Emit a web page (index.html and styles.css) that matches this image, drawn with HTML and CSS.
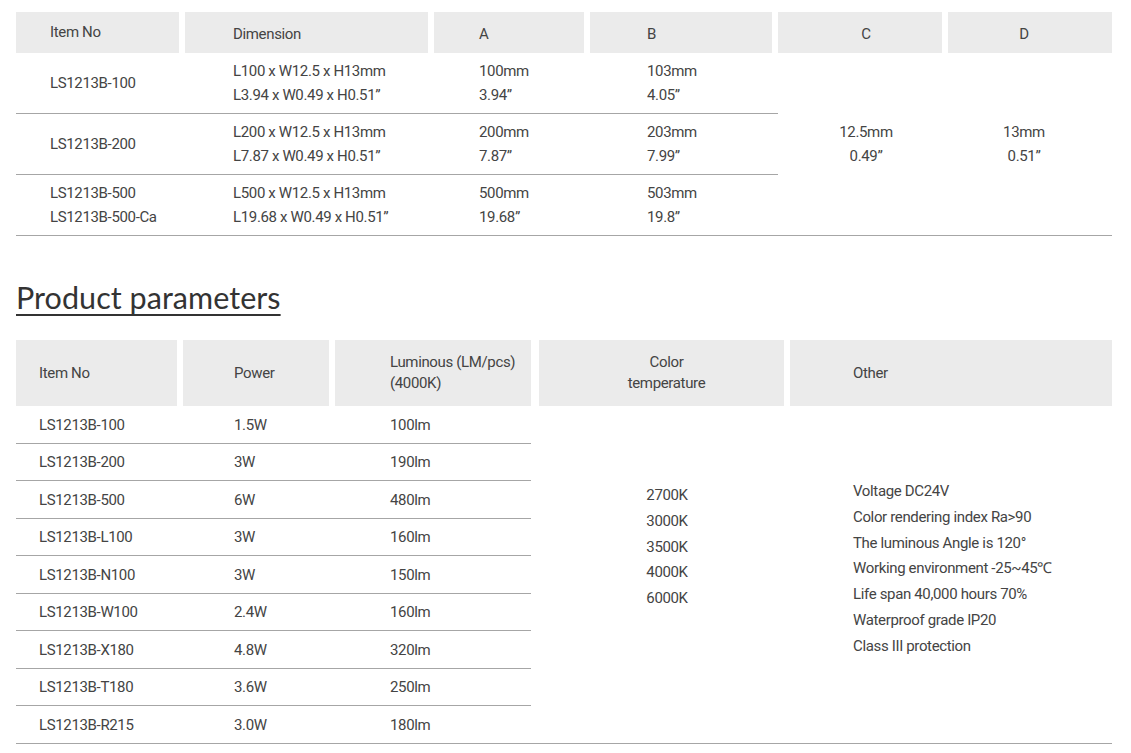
FILE: index.html
```html
<!DOCTYPE html>
<html>
<head>
<meta charset="utf-8">
<link rel="stylesheet" href="styles.css">
</head>
<body>
<div class="page">
  <table class="spec dims">
    <colgroup>
      <col class="d1"><col class="d2"><col class="d3"><col class="d4"><col class="d5"><col class="d6">
    </colgroup>
    <thead>
      <tr>
        <th class="pl-item up">Item No</th>
        <th class="pl-dim">Dimension</th>
        <th class="pl-a">A</th>
        <th class="pl-b">B</th>
        <th class="center col-c">C</th>
        <th class="center col-d last">D</th>
      </tr>
    </thead>
    <tbody>
      <tr>
        <td class="pl-item">LS1213B-100</td>
        <td class="pl-dim">L100 x W12.5 x H13mm<br>L3.94 x W0.49 x H0.51”</td>
        <td class="pl-a">100mm<br>3.94”</td>
        <td class="pl-b">103mm<br>4.05”</td>
        <td class="center span col-c" rowspan="3">12.5mm<br>0.49”</td>
        <td class="center span col-d" rowspan="3">13mm<br>0.51”</td>
      </tr>
      <tr>
        <td class="pl-item">LS1213B-200</td>
        <td class="pl-dim">L200 x W12.5 x H13mm<br>L7.87 x W0.49 x H0.51”</td>
        <td class="pl-a">200mm<br>7.87”</td>
        <td class="pl-b">203mm<br>7.99”</td>
      </tr>
      <tr>
        <td class="pl-item">LS1213B-500<br>LS1213B-500-Ca</td>
        <td class="pl-dim">L500 x W12.5 x H13mm<br>L19.68 x W0.49 x H0.51”</td>
        <td class="pl-a">500mm<br>19.68”</td>
        <td class="pl-b">503mm<br>19.8”</td>
      </tr>
    </tbody>
  </table>

  <h2 class="section-title">Product parameters</h2>

  <table class="spec params">
    <colgroup>
      <col class="p1"><col class="p2"><col class="p3"><col class="p4"><col class="p5">
    </colgroup>
    <thead>
      <tr>
        <th class="ppl-item">Item No</th>
        <th class="ppl-power">Power</th>
        <th class="ppl-lum nogap">Luminous (LM/pcs)<br>(4000K)</th>
        <th class="center wide-left temp-head">Color<br>temperature</th>
        <th class="ppl-other last">Other</th>
      </tr>
    </thead>
    <tbody>
      <tr>
        <td class="ppl-item">LS1213B-100</td>
        <td class="ppl-power">1.5W</td>
        <td class="ppl-lum">100lm</td>
        <td class="center temps" rowspan="9">2700K<br>3000K<br>3500K<br>4000K<br>6000K</td>
        <td class="others" rowspan="9">
          <ul class="other-list">
            <li>Voltage DC24V</li>
            <li>Color rendering index Ra&gt;90</li>
            <li>The luminous Angle is 120°</li>
            <li>Working environment -25~45℃</li>
            <li>Life span 40,000 hours 70%</li>
            <li>Waterproof grade IP20</li>
            <li>Class III protection</li>
          </ul>
        </td>
      </tr>
      <tr><td class="ppl-item">LS1213B-200</td><td class="ppl-power">3W</td><td class="ppl-lum">190lm</td></tr>
      <tr><td class="ppl-item">LS1213B-500</td><td class="ppl-power">6W</td><td class="ppl-lum">480lm</td></tr>
      <tr><td class="ppl-item">LS1213B-L100</td><td class="ppl-power">3W</td><td class="ppl-lum">160lm</td></tr>
      <tr><td class="ppl-item">LS1213B-N100</td><td class="ppl-power">3W</td><td class="ppl-lum">150lm</td></tr>
      <tr><td class="ppl-item">LS1213B-W100</td><td class="ppl-power">2.4W</td><td class="ppl-lum">160lm</td></tr>
      <tr><td class="ppl-item">LS1213B-X180</td><td class="ppl-power">4.8W</td><td class="ppl-lum">320lm</td></tr>
      <tr><td class="ppl-item">LS1213B-T180</td><td class="ppl-power">3.6W</td><td class="ppl-lum">250lm</td></tr>
      <tr><td class="ppl-item">LS1213B-R215</td><td class="ppl-power">3.0W</td><td class="ppl-lum">180lm</td></tr>
    </tbody>
  </table>
</div>
</body>
</html>
```

FILE: styles.css
```css
* { box-sizing: border-box; }

html, body {
  margin: 0;
  padding: 0;
  background: #fff;
}

body {
  font-family: Roboto, "Liberation Sans", sans-serif;
  font-size: 15px;
  color: #444;
  letter-spacing: -0.35px;
}

.page {
  padding: 12px 19px 0 16px;
  width: 1131px;
}

.spec {
  width: 1096px;
  border-collapse: separate;
  border-spacing: 0;
  table-layout: fixed;
}

.spec th {
  background: #ebebeb;
  background-clip: padding-box;
  border-right: 6px solid #fff;
  font-weight: 400;
  text-align: left;
  padding: 0;
}

.spec th.last { border-right: 0; }

.spec td {
  padding: 0;
  text-align: left;
  border-bottom: 1px solid #a6a6a6;
}

.spec .center { text-align: center; }

/* ---------- Dimensions table ---------- */
.dims .d1 { width: 169px; }
.dims .d2 { width: 249px; }
.dims .d3 { width: 156px; }
.dims .d4 { width: 188px; }
.dims .d5 { width: 170px; }
.dims .d6 { width: 164px; }

.dims th {
  height: 41px;
  vertical-align: middle;
  padding-top: 2px;
}

.dims th.up { padding-top: 0; padding-bottom: 2px; }

.dims td {
  height: 61px;
  line-height: 24px;
  vertical-align: middle;
}

.dims .pl-item { padding-left: 34px; }
.dims .pl-dim { padding-left: 48px; }
.dims .pl-a { padding-left: 45px; }
.dims .pl-b { padding-left: 57px; }

.dims th.col-c { padding-left: 12px; }
.dims th.col-d { padding-right: 12px; }
.dims td.col-c { padding-left: 6px; }
.dims td.col-d { padding-right: 12px; }

/* ---------- Section title ---------- */
.section-title {
  margin: 43px 0 25px 0;
  font-family: Lato, "Open Sans", sans-serif;
  font-weight: 400;
  font-size: 30.5px;
  line-height: 36px;
  color: #333;
  letter-spacing: 0.05px;
  text-decoration: underline;
  text-decoration-thickness: 2px;
  text-underline-offset: 5px;
}

/* ---------- Parameters table ---------- */
.params .p1 { width: 167px; }
.params .p2 { width: 152px; }
.params .p3 { width: 196px; }
.params .p4 { width: 259px; }
.params .p5 { width: 322px; }

.params th {
  height: 66px;
  line-height: 21px;
  vertical-align: middle;
}

.params th.nogap { border-right: 0; }
.params th.wide-left { border-left: 8px solid #fff; }
.params th.temp-head { padding-left: 10px; }

.params tbody tr:nth-child(odd) td { height: 38px; }
.params tbody tr:nth-child(even) td { height: 37px; }

.params td {
  vertical-align: middle;
}

.params .ppl-item { padding-left: 23px; }
.params .ppl-power { padding-left: 51px; }
.params .ppl-lum { padding-left: 55px; }
.params .ppl-other { padding-left: 63px; }

.params td.temps,
.params td.others {
  vertical-align: top;
  border-bottom: 1px solid #a6a6a6;
  line-height: 25.8px;
}

.params td.temps {
  padding-top: 77px;
  padding-left: 19px;
  padding-right: 6px;
}

.params td.others {
  padding-top: 73px;
  padding-left: 63px;
}

.other-list {
  list-style: none;
  margin: 0;
  padding: 0;
}
```
